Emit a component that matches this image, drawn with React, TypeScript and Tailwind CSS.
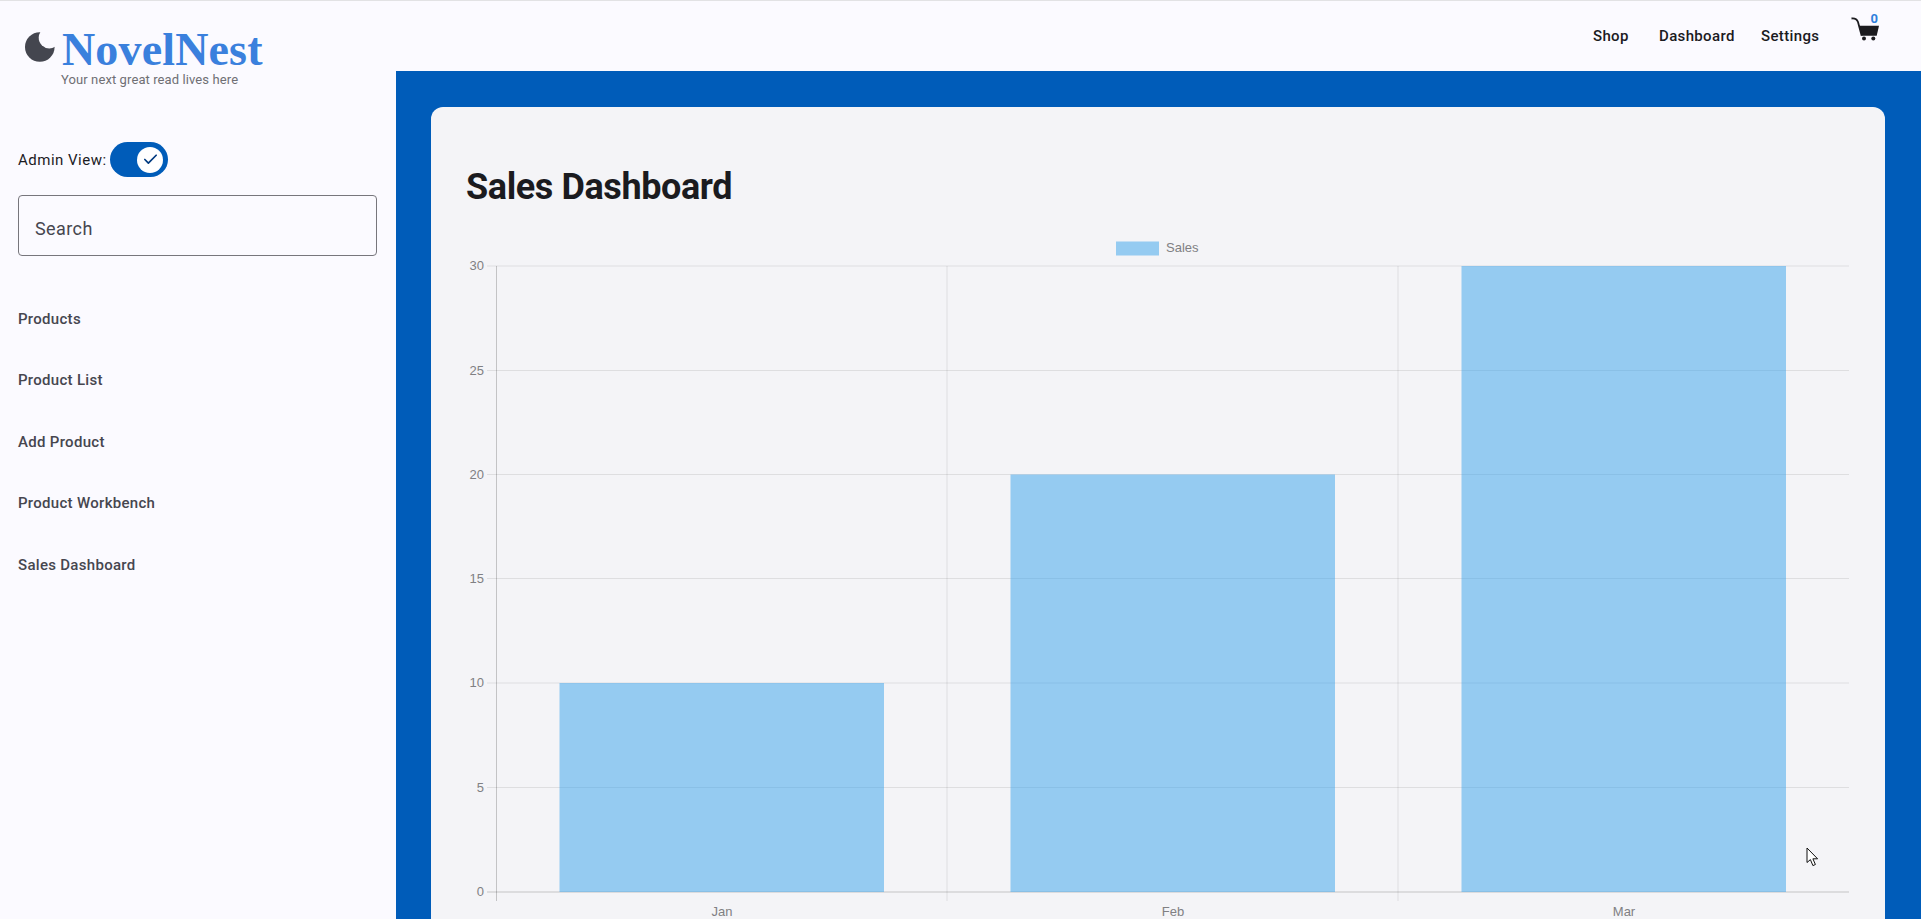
import { Check } from 'lucide-react';

const sideLinks = ['Products', 'Product List', 'Add Product', 'Product Workbench', 'Sales Dashboard'];
const topLinks = [
  { label: 'Shop', cls: 'w-[66px]' },
  { label: 'Dashboard', cls: 'w-[102px]' },
  { label: 'Settings', cls: 'w-[90px]' },
];
const ticks = [
  { label: '30', y: 266 },
  { label: '25', y: 370.5 },
  { label: '20', y: 474.5 },
  { label: '15', y: 578.5 },
  { label: '10', y: 683 },
  { label: '5', y: 787.5 },
  { label: '0', y: 892 },
];
const bars = [
  { label: 'Jan', x: 559.5, top: 683 },
  { label: 'Feb', x: 1010.5, top: 474.5 },
  { label: 'Mar', x: 1461.5, top: 266 },
];
const gridX = [496.5, 947, 1398];

function SalesChart() {
  return (
    <svg viewBox="466 230 1384 700" className="block w-[1384px] h-[700px] shrink-0" style={{ fontFamily: '"Liberation Sans", Arial, sans-serif' }}>
      <rect x="1116" y="241.5" width="43" height="14" fill="#36a2eb" fillOpacity="0.5" />
      <text x="1166" y="248.5" fontSize="13" fill="#808083" dominantBaseline="middle">Sales</text>
      {gridX.map((x) => (
        <line key={x} x1={x} x2={x} y1="266" y2="901" stroke="#000" strokeOpacity={x === 496.5 ? 0.2 : 0.09} />
      ))}
      {ticks.map((t) => (
        <g key={t.label}>
          <line x1="487" x2="1849" y1={t.y} y2={t.y} stroke="#000" strokeOpacity={t.label === '0' ? 0.2 : 0.09} />
          <text x="484" y={t.y + 1} fontSize="13" textAnchor="end" dominantBaseline="middle" fill="#808083">{t.label}</text>
        </g>
      ))}
      {bars.map((b) => (
        <g key={b.label}>
          <rect x={b.x} y={b.top} width="324.5" height={892 - b.top} fill="#36a2eb" fillOpacity="0.5" />
          <text x={b.x + 162.5} y="913" fontSize="13" textAnchor="middle" dominantBaseline="middle" fill="#808083">{b.label}</text>
        </g>
      ))}
    </svg>
  );
}

export default function App() {
  return (
    <div className="h-screen overflow-hidden flex flex-col bg-[#fbfaff] font-['Roboto',sans-serif] text-[#1b1b1f]">
      {/* Top bar */}
      <header className="h-[71px] shrink-0 border-t border-[#e2e2e4] flex justify-between">
        <div className="pl-[25px] pt-[27px]">
          <div className="flex items-center h-[44px]">
            <svg viewBox="0 0 30 30" className="w-[30px] h-[30px] mr-[7px] mb-[6px]">
              <circle cx="14.8" cy="15" r="14.8" fill="#44464f" />
              <circle cx="24.3" cy="5.8" r="10.6" fill="#fbfaff" />
            </svg>
            <span className="font-['Liberation_Serif',serif] font-bold text-[46px] leading-none tracking-[0.15px] text-[#3a80dd]">NovelNest</span>
          </div>
          <p className="ml-[36px] text-[13px] leading-[15px] tracking-[0.1px] text-[#6f6f74]">Your next great read lives here</p>
        </div>
        <nav className="flex items-start pr-[42px]">
          {topLinks.map((l) => (
            <a key={l.label} className={`${l.cls} pt-[25px] text-[15px] leading-[20px] font-medium tracking-[0.35px] whitespace-nowrap`}>{l.label}</a>
          ))}
          <div className="relative w-[28px] h-[24px] mt-[16px]">
            <svg viewBox="0 0 28 24" className="w-[28px] h-[24px]">
              <path d="M8 8.7 H28 L25.7 18.7 H10.7 Z" fill="#1b1b1f" />
              <path d="M0.5 1.5 C4 1 6 2.5 7 5 L10.7 18.7" fill="none" stroke="#1b1b1f" strokeWidth="1.8" />
              <circle cx="13" cy="21.6" r="2" fill="#1b1b1f" />
              <circle cx="22.3" cy="21.6" r="2" fill="#1b1b1f" />
            </svg>
            <span className="absolute right-[1px] -top-[6px] text-[13px] leading-[16px] font-bold text-[#2f7fdc]">0</span>
          </div>
        </nav>
      </header>

      <div className="flex-1 flex min-h-0">
        {/* Sidebar */}
        <aside className="w-[396px] shrink-0 pl-[18px]">
          <div className="flex items-center mt-[71px] h-[35px]">
            <span className="w-[92px] pt-[1px] text-[15px] tracking-[0.5px] whitespace-nowrap">Admin View:</span>
            <div className="w-[58px] h-[35px] rounded-full bg-[#005cb9] flex items-center justify-end pr-[5px]">
              <div className="w-[26px] h-[26px] rounded-full bg-white flex items-center justify-center">
                <Check className="w-[17px] h-[17px] text-[#003a80]" strokeWidth={2.4} />
              </div>
            </div>
          </div>
          <div className="mt-[18px] w-[359px] h-[61px] border border-[#77767c] rounded-[4px] flex items-center pl-[16px] pt-[5px] text-[18px] tracking-[0.4px] text-[#46464f]">
            Search
          </div>
          <ul className="mt-[32px]">
            {sideLinks.map((s) => (
              <li key={s} className="h-[61.6px] flex items-center text-[15px] font-medium tracking-[0.3px] text-[#46464f]">{s}</li>
            ))}
          </ul>
        </aside>

        {/* Main */}
        <main className="flex-1 min-w-0 bg-[#005cb9] pt-[36px] pl-[35px] pr-[36px] overflow-hidden">
          <div className="relative h-[900px] bg-[#f4f4f7] rounded-[12px] pt-[59px] px-[35px]">
            <h1 className="text-[36px] leading-[42px] font-bold tracking-[-0.4px] mb-[22px] text-[#1b1b1f]">Sales Dashboard</h1>
            <SalesChart />
            {/* mouse pointer left in the capture */}
            <svg viewBox="0 0 14 20" className="absolute left-[1375px] top-[740px] w-[14px] h-[20px]">
              <path d="M1 1 V15.5 L4.4 12.6 L6.9 18.6 L9.4 17.5 L6.9 11.8 H11.6 Z" fill="#fff" stroke="#111" strokeWidth="1" />
            </svg>
          </div>
        </main>
      </div>
    </div>
  );
}
